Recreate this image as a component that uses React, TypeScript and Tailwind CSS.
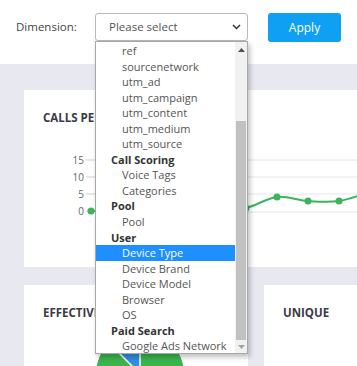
import React from "react";

type Item = { label: string; kind: "group" | "opt"; selected?: boolean };

const items: Item[] = [
  { label: "ref", kind: "opt" },
  { label: "sourcenetwork", kind: "opt" },
  { label: "utm_ad", kind: "opt" },
  { label: "utm_campaign", kind: "opt" },
  { label: "utm_content", kind: "opt" },
  { label: "utm_medium", kind: "opt" },
  { label: "utm_source", kind: "opt" },
  { label: "Call Scoring", kind: "group" },
  { label: "Voice Tags", kind: "opt" },
  { label: "Categories", kind: "opt" },
  { label: "Pool", kind: "group" },
  { label: "Pool", kind: "opt" },
  { label: "User", kind: "group" },
  { label: "Device Type", kind: "opt", selected: true },
  { label: "Device Brand", kind: "opt" },
  { label: "Device Model", kind: "opt" },
  { label: "Browser", kind: "opt" },
  { label: "OS", kind: "opt" },
  { label: "Paid Search", kind: "group" },
  { label: "Google Ads Network", kind: "opt" },
];

function smoothPath(pts: [number, number][]) {
  let d = `M${pts[0][0]},${pts[0][1]}`;
  for (let i = 0; i < pts.length - 1; i++) {
    const p0 = pts[i - 1] || pts[i];
    const p1 = pts[i];
    const p2 = pts[i + 1];
    const p3 = pts[i + 2] || p2;
    const c1x = p1[0] + (p2[0] - p0[0]) / 6;
    const c1y = p1[1] + (p2[1] - p0[1]) / 6;
    const c2x = p2[0] - (p3[0] - p1[0]) / 6;
    const c2y = p2[1] - (p3[1] - p1[1]) / 6;
    d += ` C${c1x},${c1y} ${c2x},${c2y} ${p2[0]},${p2[1]}`;
  }
  return d;
}

const linePts: [number, number][] = [
  [91, 211],
  [122, 211],
  [153, 211],
  [184, 211],
  [215, 211],
  [246, 208],
  [277, 197],
  [308, 201],
  [339, 201],
  [370, 192],
];

function LineChart() {
  // svg placed at page (24,150)
  return (
    <svg width="333" height="70" className="block">
      <g transform="translate(-24,-150)">
        {[160, 177, 194, 212].map((y) => (
          <line key={y} x1="95" x2="357" y1={y} y2={y} stroke="#e6e6e6" strokeWidth="1" />
        ))}
        {[
          ["15", 160],
          ["10", 177],
          ["5", 194],
          ["0", 211],
        ].map(([t, y]) => (
          <g key={t as string}>
            <text
              x="84"
              y={(y as number) + 3.5}
              textAnchor="end"
              fontSize="10"
              fill="#666"
              fontFamily="'Open Sans', sans-serif"
            >
              {t}
            </text>
            <line x1="86" x2="95" y1={y as number} y2={y as number} stroke="#cfcfcf" />
          </g>
        ))}
        <path d={smoothPath(linePts)} fill="none" stroke="#3cb45c" strokeWidth="2" />
        {linePts.map(([x, y]) => (
          <circle key={x} cx={x} cy={y} r="3.5" fill="#3cb45c" />
        ))}
      </g>
    </svg>
  );
}

function Pie() {
  // svg at page (24, 325); center page (140,374) => (116,49)
  const cx = 116;
  const cy = 49;
  const r = 44;
  const a = (-45 * Math.PI) / 180;
  const bx = cx + r * Math.sin(a);
  const by = cy - r * Math.cos(a);
  return (
    <svg width="224" height="60" className="block">
      <circle cx={cx} cy={cy} r={r} fill="#3cb44e" />
      <path d={`M${cx},${cy} L${bx},${by} A${r},${r} 0 0 1 ${cx},${cy - r} Z`} fill="#2f8fe0" />
      <line x1={cx} y1={cy} x2={bx} y2={by} stroke="#fff" strokeWidth="1.5" />
      <line x1={cx} y1={cy} x2={cx} y2={cy - r} stroke="#fff" strokeWidth="1.5" />
    </svg>
  );
}

export default function App() {
  return (
    <div
      className="relative w-[357px] h-[366px] overflow-hidden bg-white text-[#333]"
      style={{ fontFamily: "'Open Sans', 'Noto Sans', sans-serif" }}
    >
      {/* header */}
      <div className="h-[64px] flex items-start pt-[13px]">
        <div className="w-[95px] pl-[16px] h-[28px] flex items-center text-[11.5px] text-[#444]">Dimension:</div>
        <div className="w-[153px] h-[28px] border border-[#b9b9b9] rounded-[3px] flex items-center pl-[13px] pr-[6px] text-[11.5px] text-[#555] bg-white">
          <span className="flex-1">Please select</span>
          <svg width="9" height="6" viewBox="0 0 9 6">
            <path d="M1 1 L4.5 4.5 L8 1" stroke="#333" strokeWidth="1.5" fill="none" />
          </svg>
        </div>
        <div className="ml-[20px] w-[73px] h-[29px] rounded-[3px] bg-[#0fa0f3] text-white flex items-center justify-center text-[12px]">
          Apply
        </div>
      </div>

      {/* content */}
      <div className="bg-[#e8e8f1] pl-[24px] pt-[26px] h-[302px]">
        <div className="bg-white h-[177px] w-[340px] pt-[20px]">
          <div className="ml-[19px] w-[52px] overflow-hidden whitespace-nowrap text-[11.5px] font-bold text-[#3a3a48] h-[16px] leading-[16px]">
            CALLS PER
          </div>
          <div className="mt-[24px]">
            <LineChart />
          </div>
        </div>
        <div className="flex mt-[18px] gap-[16px]">
          <div className="bg-white w-[224px] h-[120px] pt-[20px]">
            <div className="ml-[19px] w-[52px] overflow-hidden whitespace-nowrap text-[11.5px] font-bold text-[#3a3a48] h-[16px] leading-[16px]">
              EFFECTIVE
            </div>
            <div className="mt-[4px]">
              <Pie />
            </div>
          </div>
          <div className="bg-white w-[120px] h-[120px] pt-[20px]">
            <div className="pl-[19px] text-[11.5px] font-bold text-[#3a3a48] h-[16px] leading-[16px]">UNIQUE</div>
          </div>
        </div>
      </div>

      {/* dropdown list */}
      <div className="absolute left-[95px] top-[41px] w-[153px] h-[313px] bg-white border border-[#a8a8a8] shadow-[2px_3px_5px_rgba(0,0,0,0.25)] flex">
        <div className="flex-1 flex flex-col overflow-hidden pt-[1px]">
          {items.map((it, i) => (
            <div
              key={i}
              className={
                it.kind === "group"
                  ? "shrink-0 h-[15.55px] leading-[15.55px] pl-[15px] text-[11px] font-bold text-[#333] whitespace-nowrap"
                  : it.selected
                  ? "shrink-0 h-[15.55px] leading-[15.55px] pl-[26px] text-[11px] bg-[#1e8fff] text-white whitespace-nowrap"
                  : "shrink-0 h-[15.55px] leading-[15.55px] pl-[26px] text-[11px] text-[#555] whitespace-nowrap"
              }
            >
              {it.label}
            </div>
          ))}
        </div>
        <div className="w-[12px] bg-[#f1f1f1] flex flex-col items-center">
          <div className="h-[16px] flex items-center justify-center">
            <svg width="7" height="4" viewBox="0 0 7 4">
              <path d="M0 4 L3.5 0 L7 4 Z" fill="#505050" />
            </svg>
          </div>
          <div className="h-[63px]" />
          <div className="w-[10px] h-[219px] bg-[#c1c1c1]" />
          <div className="flex-1 flex items-center justify-center">
            <svg width="7" height="4" viewBox="0 0 7 4">
              <path d="M0 0 L3.5 4 L7 0 Z" fill="#a3a3a3" />
            </svg>
          </div>
        </div>
      </div>
    </div>
  );
}
